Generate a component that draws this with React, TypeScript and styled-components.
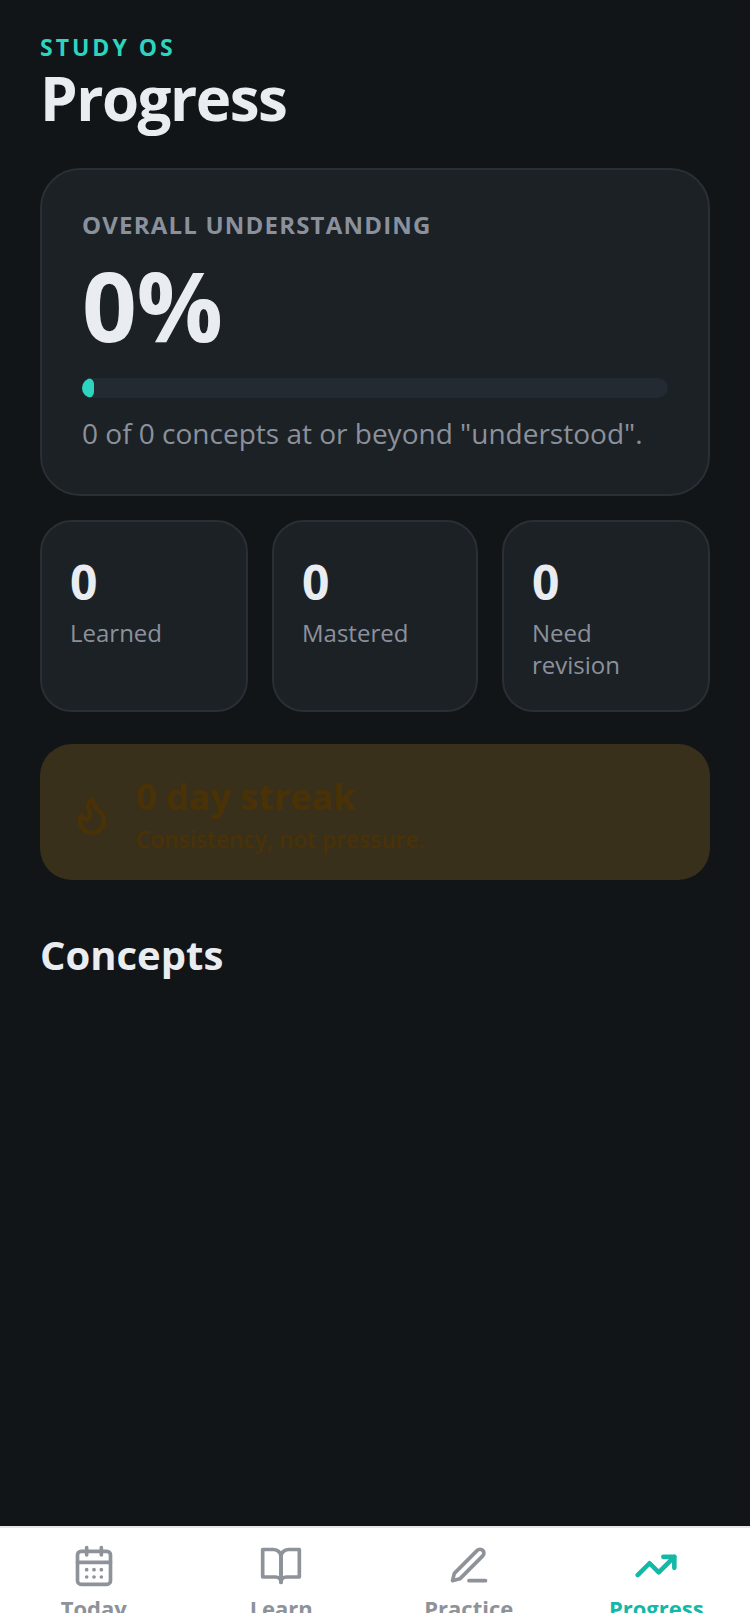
import React from "react";
import styled, { createGlobalStyle } from "styled-components";

const Global = createGlobalStyle`
  html, body { margin: 0; padding: 0; background: #111518; }
  * { box-sizing: border-box; }
  body { font-family: "Open Sans", "Noto Sans", sans-serif; }
`;

const Screen = styled.div`
  width: 750px;
  height: 1624px;
  display: flex;
  flex-direction: column;
  background: #111518;
  overflow: hidden;
`;
const Main = styled.main`
  flex: 1;
  padding: 31px 40px 0;
  display: flex;
  flex-direction: column;
`;
const Eyebrow = styled.div`
  font-size: 23px;
  line-height: 32px;
  font-weight: 700;
  letter-spacing: 3px;
  color: #2dd4bf;
`;
const Title = styled.h1`
  margin: 0;
  font-size: 60px;
  line-height: 70px;
  font-weight: 700;
  letter-spacing: -1.5px;
  color: #e9edf1;
`;
const Hero = styled.section`
  margin-top: 35px;
  height: 328px;
  padding: 39px 40px 0;
  border: 2px solid #2a2f35;
  border-radius: 40px;
  background: #1c2126;
`;
const HeroLabel = styled.div`
  font-size: 24px;
  line-height: 32px;
  font-weight: 700;
  letter-spacing: 1.2px;
  color: #8b919c;
`;
const HeroValue = styled.div`
  margin-top: 8px;
  font-size: 96px;
  line-height: 112px;
  font-weight: 700;
  letter-spacing: -0.5px;
  color: #e9edf1;
`;
const Track = styled.div`
  margin-top: 17px;
  height: 20px;
  border-radius: 10px;
  background: #232a31;
  overflow: hidden;
`;
const Fill = styled.div`
  height: 100%;
  border-radius: 10px;
  background: #2dd4bf;
`;
const HeroNote = styled.p`
  margin: 15px 0 0;
  font-size: 28px;
  line-height: 40px;
  color: #8b919c;
`;
const Stats = styled.section`
  margin-top: 24px;
  display: grid;
  grid-template-columns: 207.5px 205.5px 208px;
  column-gap: 24.5px;
`;
const StatCard = styled.div`
  height: 192px;
  padding: 32px 28px;
  border: 2px solid #2a2f35;
  border-radius: 32px;
  background: #1c2126;
`;
const StatValue = styled.div`
  font-size: 48px;
  line-height: 56px;
  font-weight: 700;
  color: #e9edf1;
`;
const StatLabel = styled.div`
  margin-top: 7px;
  font-size: 24px;
  line-height: 32px;
  color: #8b919c;
`;
const Streak = styled.section`
  margin-top: 32px;
  height: 136px;
  padding: 8px 32px 0 31px;
  display: flex;
  align-items: center;
  gap: 23px;
  border-radius: 32px;
  background: #38301a;
  color: #4a3206;
`;
const FlameIcon = styled.svg`
  width: 42px;
  height: 42px;
  margin-bottom: 2px;
  flex: none;
`;
const StreakTitle = styled.div`
  font-size: 36px;
  line-height: 44px;
  font-weight: 700;
`;
const StreakNote = styled.div`
  margin-top: 4px;
  font-size: 22.7px;
  line-height: 34px;
  font-weight: 600;
`;
const SectionTitle = styled.h2`
  margin: 47px 0 0;
  font-size: 40px;
  line-height: 56px;
  font-weight: 700;
  color: #e9edf1;
`;
const TabBar = styled.nav`
  flex: none;
  height: 98px;
  padding-top: 16px;
  display: grid;
  grid-template-columns: repeat(4, 1fr);
  background: #fff;
  border-top: 2px solid #e5e7eb;
`;
const Tab = styled.div<{ $active?: boolean }>`
  height: 69px;
  overflow: hidden;
  display: flex;
  flex-direction: column;
  align-items: center;
  color: ${(p) => (p.$active ? "#14b8a6" : "#8e9299")};
`;
const TabIcon = styled.svg`
  width: 44px;
  height: 44px;
  flex: none;
`;
const TabLabel = styled.span`
  margin-top: 5px;
  font-size: 22px;
  line-height: 30px;
  font-weight: 700;
`;

const iconProps = {
  viewBox: "0 0 24 24",
  fill: "none",
  stroke: "currentColor",
  strokeWidth: 2,
  strokeLinecap: "round" as const,
  strokeLinejoin: "round" as const,
};

const stats = ["Learned", "Mastered", "Need revision"];

export default function App() {
  return (
    <Screen>
      <Global />
      <Main>
        <Eyebrow>STUDY OS</Eyebrow>
        <Title>Progress</Title>
        <Hero>
          <HeroLabel>OVERALL UNDERSTANDING</HeroLabel>
          <HeroValue>0%</HeroValue>
          <Track>
            <Fill style={{ width: "2%" }} />
          </Track>
          <HeroNote>0 of 0 concepts at or beyond "understood".</HeroNote>
        </Hero>
        <Stats>
          {stats.map((label) => (
            <StatCard key={label}>
              <StatValue>0</StatValue>
              <StatLabel>{label}</StatLabel>
            </StatCard>
          ))}
        </Stats>
        <Streak>
          <FlameIcon {...iconProps} strokeWidth={2.4}>
            <path d="M8.5 14.5A2.5 2.5 0 0 0 11 12c0-1.38-.5-2-1-3-1.07-2.14-.22-4.05 2-6 .5 2.5 2 4.9 4 6.5 2 1.6 3 3.5 3 5.5a7 7 0 1 1-14 0c0-1.15.43-2.29 1-3a2.5 2.5 0 0 0 2.5 2.5z" />
          </FlameIcon>
          <div>
            <StreakTitle>0 day streak</StreakTitle>
            <StreakNote>Consistency, not pressure.</StreakNote>
          </div>
        </Streak>
        <SectionTitle>Concepts</SectionTitle>
      </Main>
      <TabBar>
        <Tab>
          <TabIcon {...iconProps}>
            <path d="M8 2v4M16 2v4" />
            <rect x="3" y="4" width="18" height="18" rx="2" />
            <path d="M3 10h18M8 14h.01M12 14h.01M16 14h.01M8 18h.01M12 18h.01M16 18h.01" />
          </TabIcon>
          <TabLabel>Today</TabLabel>
        </Tab>
        <Tab>
          <TabIcon {...iconProps}>
            <path d="M2 3h6a4 4 0 0 1 4 4v14a3 3 0 0 0-3-3H2z" />
            <path d="M22 3h-6a4 4 0 0 0-4 4v14a3 3 0 0 1 3-3h7z" />
          </TabIcon>
          <TabLabel>Learn</TabLabel>
        </Tab>
        <Tab>
          <TabIcon {...iconProps}>
            <path d="M12 20h9" />
            <path d="M16.5 3.5a2.12 2.12 0 0 1 3 3L7 19l-4 1 1-4Z" />
          </TabIcon>
          <TabLabel>Practice</TabLabel>
        </Tab>
        <Tab $active>
          <TabIcon {...iconProps} strokeWidth={2.5}>
            <path d="M16 7h6v6" />
            <path d="m22 7-8.5 8.5-5-5L2 17" />
          </TabIcon>
          <TabLabel>Progress</TabLabel>
        </Tab>
      </TabBar>
    </Screen>
  );
}
